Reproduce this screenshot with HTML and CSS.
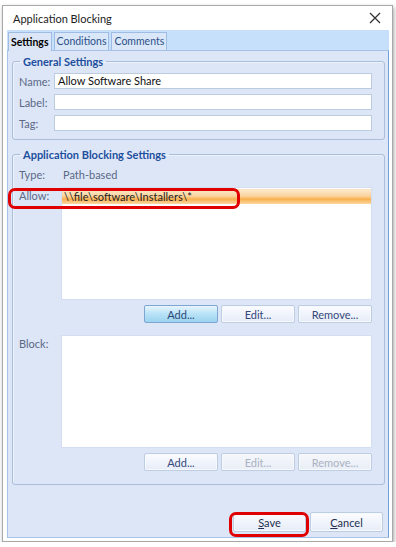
FILE: index.html
```html
<!DOCTYPE html>
<html lang="en">
<head>
    <meta charset="UTF-8">
    <meta name="viewport" content="width=device-width, initial-scale=1.0">
    <title>Application Blocking</title>
    <link rel="stylesheet" href="styles.css">
</head>
<body>

    <div class="window">
        <div class="titlebar">
            <span class="title">Application Blocking</span>
            <svg class="close" width="12" height="12" viewBox="0 0 12 12">
                <path d="M1 1 L11 11 M11 1 L1 11" stroke="#333" stroke-width="1.3" fill="none"/>
            </svg>
        </div>
        <div class="content">
            <div class="tabs">
                <div class="tab active">Settings</div>
                <div class="tab">Conditions</div>
                <div class="tab">Comments</div>
            </div>
            <div class="panel">
                <fieldset class="group general">
                    <legend>General Settings</legend>
                    <div class="row">
                        <label>Name:</label>
                        <div class="input">Allow Software Share</div>
                    </div>
                    <div class="row">
                        <label>Label:</label>
                        <div class="input"></div>
                    </div>
                    <div class="row">
                        <label>Tag:</label>
                        <div class="input"></div>
                    </div>
                </fieldset>

                <fieldset class="group blocking">
                    <legend>Application Blocking Settings</legend>
                    <div class="row type-row">
                        <label class="wide">Type:</label>
                        <span class="value">Path-based</span>
                    </div>
                    <div class="list-row">
                        <label class="wide">Allow:</label>
                        <div class="list">
                            <div class="item selected">\\file\software\Installers\*</div>
                        </div>
                    </div>
                    <div class="buttons">
                        <button class="btn hot">Add...</button>
                        <button class="btn">Edit...</button>
                        <button class="btn">Remove...</button>
                    </div>
                    <div class="list-row block-row">
                        <label class="wide">Block:</label>
                        <div class="list"></div>
                    </div>
                    <div class="buttons">
                        <button class="btn">Add...</button>
                        <button class="btn" disabled>Edit...</button>
                        <button class="btn" disabled>Remove...</button>
                    </div>
                </fieldset>

                <div class="footer">
                    <button class="btn big"><u>S</u>ave</button>
                    <button class="btn big"><u>C</u>ancel</button>
                </div>
            </div>
        </div>

        <!-- annotation marks drawn over the dialog -->
        <div class="mark mark-allow"></div>
        <div class="mark mark-save"></div>
    </div>

</body>
</html>
```

FILE: styles.css
```css
body {
    margin: 0;
    background-color: #fff;
    font-family: Lato, "Noto Sans", sans-serif;
    font-size: 11px;
    line-height: 15px;
}
.window {
    position: relative;
    box-sizing: border-box;
    width: 391px;
    height: 537px;
    margin: 5px 0 0 2px;
    border: 1px solid #a8a8a8;
    box-shadow: 1px 2px 4px rgba(0, 0, 0, 0.35);
    background: #fff;
    display: flex;
    flex-direction: column;
}
.titlebar {
    height: 24px;
    display: flex;
    align-items: center;
    justify-content: space-between;
    padding: 0 11px 0 10px;
}
.title {
    color: #222;
    font-size: 11px;
}
.content {
    flex: 1;
    display: flex;
    flex-direction: column;
    padding: 0 3px 3px 4px;
}
.tabs {
    height: 20px;
    background: #c6dffa;
    display: flex;
    align-items: flex-end;
    padding-left: 1px;
    gap: 2px;
}
.tab {
    height: 17px;
    line-height: 17px;
    padding: 0 2px;
    font-size: 10.5px;
    color: #2d4f88;
    background: #d9e7f8;
    border: 1px solid #9fbde4;
    border-bottom: none;
}
.tab.active {
    height: 18px;
    line-height: 18px;
    color: #000;
    font-weight: bold;
    background: #dce6f6;
    position: relative;
    top: 1px;
}
.panel {
    flex: 1;
    display: flex;
    flex-direction: column;
    background: #dce6f6;
    border: 1px solid #a7c2e6;
    border-right-color: #6f9fdc;
}
.group {
    margin: 0 3px 0 4px;
    padding: 0 12px 8px 6px;
    border: 1px solid #a9bedb;
    border-radius: 3px;
    box-shadow: inset 1px 1px 0 #eef3fb;
}
.group legend {
    padding: 0 3px;
    margin-left: 1px;
    color: #1d4e9e;
    font-weight: bold;
    font-size: 11px;
}
.general {
    margin-top: 3px;
}
.blocking {
    margin-top: 7px;
    padding-bottom: 13px;
}
.row {
    display: flex;
    align-items: center;
    margin-top: 5px;
}
.general .row:first-of-type {
    margin-top: 4px;
}
.row label, .list-row label {
    width: 35px;
    color: #5b6886;
}
label.wide {
    width: 42px;
}
.input {
    flex: 1;
    height: 14px;
    line-height: 14px;
    padding: 0 3px;
    background: #fff;
    border: 1px solid #bccbe0;
    color: #111;
}
.type-row {
    margin-top: 5px;
    height: 15px;
}
.value {
    color: #5b6886;
    margin-left: 2px;
}
.list-row {
    display: flex;
    margin-top: 5px;
}
.list-row label {
    padding-top: 1px;
}
.block-row {
    margin-top: 12px;
}
.block-row label {
    padding-top: 1px;
}
.list {
    flex: 1;
    height: 110px;
    background: #fff;
    border: 1px solid #d3def0;
    padding-top: 1px;
}
.item {
    height: 14px;
    line-height: 14px;
    padding-left: 2px;
    color: #222;
}
.item.selected {
    background: linear-gradient(#fde9cc, #fbd29a 45%, #f9b04f 65%, #fcd7a2);
    border-top: 1px solid #fbe1bd;
}
.buttons {
    display: flex;
    justify-content: flex-end;
    gap: 3px;
    margin-top: 5px;
}
.btn {
    width: 74px;
    height: 18px;
    padding: 0;
    font-family: inherit;
    font-size: 11px;
    color: #35497a;
    border: 1px solid #bfcde2;
    border-radius: 2px;
    background: linear-gradient(#fbfcff, #e6ecf8);
    box-shadow: inset 0 0 0 1px #f6f9fe;
}
.btn.hot {
    color: #2b4878;
    border-color: #7ea6d3;
    background: linear-gradient(#e8f5fd, #b8e2f7 50%, #9bd4ef);
    box-shadow: none;
}
.btn:disabled {
    color: #a9b1c2;
    background: linear-gradient(#f5f7fb, #e9eef6);
}
.footer {
    margin-top: auto;
    display: flex;
    justify-content: flex-end;
    gap: 4px;
    padding: 0 5px 5px 0;
}
.btn.big {
    width: 73px;
    height: 20px;
    color: #1e2f52;
}
.mark {
    position: absolute;
    border: 3px solid #e00000;
    border-radius: 7px;
}
.mark-allow {
    left: 5px;
    top: 182px;
    width: 226px;
    height: 15px;
}
.mark-save {
    left: 226px;
    top: 506px;
    width: 74px;
    height: 19px;
}
```
